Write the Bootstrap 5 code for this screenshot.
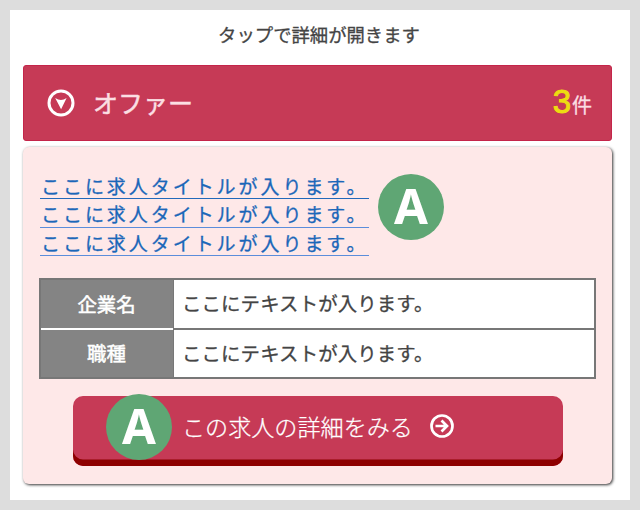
<!DOCTYPE html>
<html lang="ja">
<head>
<meta charset="utf-8">
<meta name="viewport" content="width=device-width, initial-scale=1">
<title>オファー</title>
<link href="https://cdn.jsdelivr.net/npm/bootstrap@5.3.0/dist/css/bootstrap.min.css" rel="stylesheet">
<style>
body{font-family:"Noto Sans CJK JP",sans-serif;background:#ddd;color:#444;padding:10px;height:510px;overflow:hidden}
.sheet{height:490px;padding:0 18px 0 13px;background:#fff}
.lead-note{height:55px;font-size:18.35px;line-height:48px;-webkit-text-stroke:.3px;white-space:nowrap;padding-left:3px}
.offer-head{height:76px;background:#c63a56;border:1px solid #c4254a;border-radius:3px;padding:0 19px 0 23px;color:#fbdfe3}
.offer-name{font-size:25px;line-height:36px;margin:0 0 2px 18px;-webkit-text-stroke:.5px}
.offer-num{font-family:"Liberation Sans",sans-serif;font-size:33px;line-height:36px;color:#eddc11;-webkit-text-stroke:1px}
.offer-unit{font-size:20px;line-height:36px;margin-left:1px;-webkit-text-stroke:.3px}
.offer-body{height:337px;margin-top:6px;background:#fee8e8;border-radius:6px;box-shadow:1px 1px 3px rgba(0,0,0,.8);padding:24px 17px 0 17px}
.job-titles{height:85px;width:329px;color:#1b67b9}
.job-titles a{color:inherit;text-decoration:none;font-size:19px;letter-spacing:2.95px;line-height:29px;height:28.4px;padding-left:1px;border-bottom:1px solid #2269ba;white-space:nowrap;-webkit-text-stroke:.3px}
.job-titles a+a{border-bottom-color:#5b8ddb}
.mark-a{width:66px;height:66px;border-radius:50%;background:#5fa674;color:#fff;font:bold 49px/62px "Noto Sans",sans-serif;text-align:center;flex:none}
.title-mark{margin:3px 0 0 9px}
.job-table{margin-top:22px;margin-left:-1px;width:557px;height:101px;border:2px solid #777;background:#fff;font-size:19.4px}
.job-table>div{height:47.5px}
.job-table>div+div{border-top:2px solid #777;height:49.5px}
.job-key{width:132px;background:#848484;color:#fff;-webkit-text-stroke:.5px;padding:0 1px 1px 0}
.job-table>div+div .job-key{margin-top:-2px;border-top:2px solid #fff}
.job-val{border-left:1px solid #777;padding:0 0 2px 8px;-webkit-text-stroke:.3px;white-space:nowrap;letter-spacing:.15px}
.detail-btn{width:490px;height:69.5px;margin:17px 0 0 32.5px;background:#c63a56;border:0;border-radius:10px;box-shadow:inset 0 -6.5px #8e0000;color:#fff;padding:0 0 7px 33.5px}
.detail-btn:hover{background:#c63a56;color:#fff}
.detail-text{font-size:23.1px;font-weight:300;line-height:34px;margin:0 0 3px 10px;white-space:nowrap;-webkit-text-stroke:.25px}
.detail-btn svg{margin:0 0 2px 17px}
</style>
</head>
<body>
<main class="sheet">
  <p class="lead-note text-center mb-0">タップで詳細が開きます</p>
  <header class="offer-head d-flex align-items-center">
    <svg width="28" height="28" viewBox="0 0 28 28"><circle cx="14" cy="14" r="12" fill="none" stroke="#fff" stroke-width="3"/><path d="M8.2 9Q14 13 19.6 9L14.1 20.2Z" fill="#fff"/></svg>
    <span class="offer-name">オファー</span>
    <span class="ms-auto d-flex align-items-baseline"><span class="offer-num">3</span><span class="offer-unit">件</span></span>
  </header>
  <section class="offer-body">
    <div class="d-flex align-items-start">
      <div class="job-titles d-flex flex-column">
        <a href="#">ここに求人タイトルが入ります。</a>
        <a href="#">ここに求人タイトルが入ります。</a>
        <a href="#">ここに求人タイトルが入ります。</a>
      </div>
      <span class="mark-a title-mark">A</span>
    </div>
    <div class="job-table">
      <div class="d-flex"><div class="job-key d-flex align-items-center justify-content-center">企業名</div><div class="job-val d-flex align-items-center flex-fill">ここにテキストが入ります。</div></div>
      <div class="d-flex"><div class="job-key d-flex align-items-center justify-content-center">職種</div><div class="job-val d-flex align-items-center flex-fill">ここにテキストが入ります。</div></div>
    </div>
    <button type="button" class="detail-btn btn d-flex align-items-center">
      <span class="mark-a">A</span>
      <span class="detail-text">この求人の詳細をみる</span>
      <svg width="24" height="24" viewBox="0 0 24 24" fill="none" stroke="#fff" stroke-width="2.7"><circle cx="12" cy="12" r="10.5"/><path d="M5.5 12H17M11.5 6.5L17 12L11.5 17.5"/></svg>
    </button>
  </section>
</main>
<script src="https://cdn.jsdelivr.net/npm/bootstrap@5.3.0/dist/js/bootstrap.bundle.min.js"></script>
</body>
</html>
